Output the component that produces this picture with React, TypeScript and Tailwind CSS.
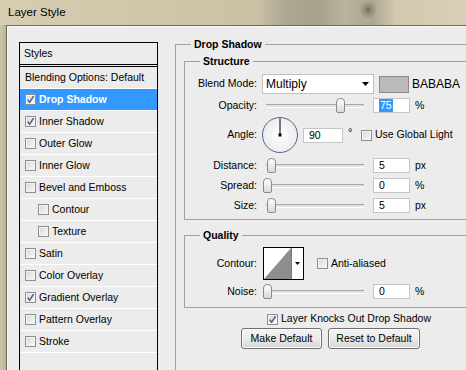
import React from "react";

const rows: { label: string; checked?: boolean; indent?: boolean; active?: boolean; bare?: boolean }[] = [
  { label: "Blending Options: Default", bare: true },
  { label: "Drop Shadow", checked: true, active: true },
  { label: "Inner Shadow", checked: true },
  { label: "Outer Glow" },
  { label: "Inner Glow" },
  { label: "Bevel and Emboss" },
  { label: "Contour", indent: true },
  { label: "Texture", indent: true },
  { label: "Satin" },
  { label: "Color Overlay" },
  { label: "Gradient Overlay", checked: true },
  { label: "Pattern Overlay" },
  { label: "Stroke" },
  { label: "", bare: true },
];

function Check({ checked }: { checked?: boolean }) {
  return (
    <span className="flex h-[11px] w-[11px] shrink-0 items-center justify-center border border-[#8e8f8f] bg-linear-to-br from-[#d6d6d6] to-[#fbfbfb] shadow-[inset_0_0_0_1px_#f4f4f4]">
      {checked && (
        <svg viewBox="0 0 9 9" className="h-[9px] w-[9px]">
          <path d="M1.6 4.6 L3.6 7.2 L7.6 1.2" fill="none" stroke="#4a5d8f" strokeWidth="1.5" />
        </svg>
      )}
    </span>
  );
}

function Slider({ pos }: { pos: number }) {
  return (
    <div className="relative ml-[5px] h-[15px] w-[105px] shrink-0">
      <div className="absolute left-[4px] top-[6px] h-[3px] w-[98px] border-t border-[#a8a8a8] bg-[#e2e2e2] shadow-[0_1px_0_#ffffff]" />
      <div
        className="absolute top-0 h-[15px] w-[9px] rounded-t-[4px] rounded-b-[2px] border border-[#8a8a8a] bg-linear-to-b from-[#ffffff] to-[#d9d9d9]"
        style={{ left: pos }}
      />
    </div>
  );
}

function Field({ children, w = "w-[37px]", ml = "ml-[6px]" }: { children: React.ReactNode; w?: string; ml?: string }) {
  return (
    <div className={`${w} ${ml} flex h-[15px] shrink-0 items-center border border-[#c6c6c6] bg-white pl-[5px] text-[10.5px] leading-[13px]`}>
      {children}
    </div>
  );
}

function Label({ children }: { children: React.ReactNode }) {
  return <div className="w-[72px] shrink-0 text-right text-[10.5px]">{children}</div>;
}

function SliderRow({ label, pos, value, unit }: { label: string; pos: number; value: string; unit: string }) {
  return (
    <div className="mt-[5px] flex h-[15px] items-center">
      <Label>{label}</Label>
      <Slider pos={pos} />
      <Field>{value}</Field>
      <span className="ml-[5px] text-[10.5px]">{unit}</span>
    </div>
  );
}

export default function App() {
  return (
    <div className="flex h-[370px] w-[466px] flex-col overflow-hidden bg-[#cbc1a4] font-['Liberation_Sans',Arial,sans-serif] text-black">
      {/* title bar */}
      <div className="flex h-[25px] shrink-0 items-center bg-[radial-gradient(circle_at_368px_10px,#6d6a5e_0px,#8d8977_3px,transparent_9px),linear-gradient(90deg,#d6cdb2_0%,#d0c7ab_30%,#cbc2a6_55%,#ada893_61%,#a5a18c_68%,#b9b49f_74%,#aba791_80%,#d2c9ae_85%,#d8d0b6_100%)] pl-[8px] text-[11.5px]">
        Layer Style
      </div>

      <div className="flex min-h-0 flex-1">
        <div className="w-[6px] shrink-0 bg-linear-to-r from-[#cfc5a8] to-[#bdb394]" />
        <div className="flex min-w-0 flex-1 items-start border-l border-t border-[#6f6a58] bg-[#ececec] shadow-[inset_1px_1px_0_#fafafa]">
          {/* styles list */}
          <div className="ml-[12px] mt-[16px] w-[139px] shrink-0 border border-black bg-[#ececec] text-[10.5px]">
            <div className="flex h-[22px] items-center border-b border-black pl-[4px]">Styles</div>
            <div className="mt-[1px] border-t border-black">
              {rows.map((r, i) => (
                <div
                  key={i}
                  className={`flex h-[22px] items-center border-b border-white ${r.indent ? "pl-[18px]" : "pl-[5px]"} ${r.active ? "bg-[#3399ff] font-bold text-white" : ""} ${r.bare ? "pl-[4px]" : ""}`}
                >
                  {!r.bare && <Check checked={r.checked} />}
                  <span className={r.bare ? "" : "ml-[3px]"}>{r.label}</span>
                </div>
              ))}
            </div>
          </div>

          {/* drop shadow panel */}
          <fieldset className="ml-[17px] mt-[12px] w-[330px] shrink-0 border border-[#a0a0a0] pb-[40px]">
            <legend className="ml-[15px] px-[3px] text-[10.5px] font-bold leading-[12px]">Drop Shadow</legend>

            <fieldset className="ml-[8px] mr-[8px] mt-[5px] border border-[#a0a0a0] pb-[6px]">
              <legend className="ml-[15px] px-[3px] text-[10.5px] font-bold leading-[12px]">Structure</legend>

              <div className="mt-[7px] flex h-[20px] items-center">
                <Label>Blend Mode:</Label>
                <div className="ml-[5px] flex h-[20px] w-[112px] shrink-0 items-center justify-between border border-[#c2c2c2] bg-white pl-[3px] pr-[4px] text-[12px]">
                  <span>Multiply</span>
                  <svg viewBox="0 0 7 4" className="h-[4px] w-[7px]">
                    <path d="M0 0 H7 L3.5 4 Z" fill="#000" />
                  </svg>
                </div>
                <div className="ml-[5px] h-[17px] w-[30px] shrink-0 border border-[#8a8a8a] bg-[#bababa]" />
                <span className="ml-[3px] text-[12px]">BABABA</span>
              </div>

              <div className="mt-[4px] flex h-[15px] items-center">
                <Label>Opacity:</Label>
                <Slider pos={74} />
                <Field>
                  <span className="bg-[#3399ff] px-[1px] text-white">75</span>
                </Field>
                <span className="ml-[5px] text-[10.5px]">%</span>
              </div>

              <div className="mt-[4px] flex h-[36px] items-center">
                <Label>Angle:</Label>
                <div className="ml-[5px] h-[36px] w-[36px] shrink-0 rounded-full border border-[#52628c] bg-radial from-[#ffffff] to-[#e6e6e6]">
                  <svg viewBox="0 0 34 34" className="h-[34px] w-[34px]">
                    <line x1="17" y1="0.5" x2="17" y2="17" stroke="#000" strokeWidth="1" />
                    <rect x="15.5" y="15.5" width="3" height="3" fill="#000" />
                  </svg>
                </div>
                <Field w="w-[40px]" ml="ml-[5px]">90</Field>
                <span className="w-[18px] shrink-0 self-start pl-[5px] pt-[7px] text-[11px]">°</span>
                <Check />
                <span className="ml-[3px] text-[10.5px]">Use Global Light</span>
              </div>

              <SliderRow label="Distance:" pos={5} value="5" unit="px" />
              <SliderRow label="Spread:" pos={1} value="0" unit="%" />
              <SliderRow label="Size:" pos={5} value="5" unit="px" />
            </fieldset>

            <fieldset className="ml-[8px] mr-[8px] mt-[9px] border border-[#a0a0a0] pb-[8px]">
              <legend className="ml-[15px] px-[3px] text-[10.5px] font-bold leading-[12px]">Quality</legend>

              <div className="mt-[6px] flex h-[33px] items-center">
                <Label>Contour:</Label>
                <div className="ml-[6px] flex h-[33px] w-[41px] shrink-0 border border-black bg-white">
                  <svg viewBox="0 0 27 31" className="h-[31px] w-[27px]">
                    <path d="M0 31 L27 0 L27 31 Z" fill="#8e8e8e" />
                  </svg>
                  <div className="flex flex-1 items-center justify-center border-l border-[#7a7a7a]">
                    <svg viewBox="0 0 5 3" className="h-[3px] w-[5px]">
                      <path d="M0 0 H5 L2.5 3 Z" fill="#000" />
                    </svg>
                  </div>
                </div>
                <span className="ml-[13px]">
                  <Check />
                </span>
                <span className="ml-[3px] text-[10.5px]">Anti-aliased</span>
              </div>

              <div className="mt-[4px] flex h-[15px] items-center">
                <Label>Noise:</Label>
                <Slider pos={1} />
                <Field>0</Field>
                <span className="ml-[5px] text-[10.5px]">%</span>
              </div>
            </fieldset>

            <div className="mt-[5px] flex h-[12px] items-center pl-[91px]">
              <Check checked />
              <span className="ml-[3px] text-[10.5px]">Layer Knocks Out Drop Shadow</span>
            </div>

            <div className="mt-[3px] flex pl-[65px]">
              <button className="flex h-[21px] w-[81px] items-center justify-center rounded-[3px] border border-[#707070] bg-linear-to-b from-[#f3f3f3] via-[#ebebeb] to-[#d5d5d5] text-[10.5px] shadow-[inset_0_0_0_1px_#fbfbfb]">
                Make Default
              </button>
              <button className="ml-[6px] flex h-[21px] w-[92px] items-center justify-center rounded-[3px] border border-[#707070] bg-linear-to-b from-[#f3f3f3] via-[#ebebeb] to-[#d5d5d5] text-[10.5px] shadow-[inset_0_0_0_1px_#fbfbfb]">
                Reset to Default
              </button>
            </div>
          </fieldset>
        </div>
      </div>
    </div>
  );
}
